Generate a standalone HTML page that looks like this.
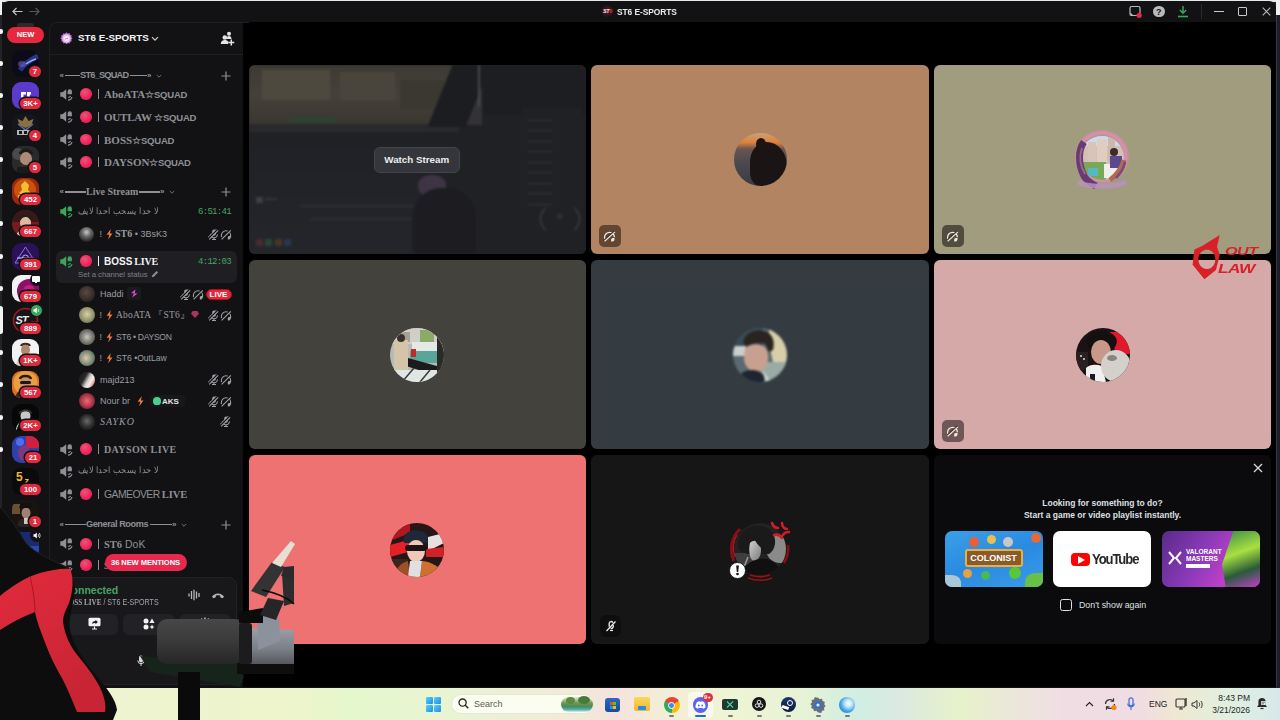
<!DOCTYPE html>
<html><head><meta charset="utf-8">
<style>
*{margin:0;padding:0;box-sizing:border-box}
html,body{width:1280px;height:720px;overflow:hidden;background:#242426;font-family:"Liberation Sans",sans-serif}
.abs{position:absolute;white-space:nowrap}
#topline{left:0;top:0;width:1280px;height:2px;background:#e8e8e8}
#win{left:2px;top:1px;width:1274px;height:687px;background:#121214;border-radius:7px 7px 0 0;overflow:hidden}
#taskbar{left:0;top:688px;width:1280px;height:32px;background:linear-gradient(90deg,#edf4d2 0%,#eef5cc 23%,#e4f7cc 28%,#e8f5d2 34%,#f2ead8 45%,#f4e2de 48%,#f3ecd8 51%,#eff5d4 57%,#e6f2d6 63%,#cfeee2 67%,#dae9e2 70%,#e6f2ca 75%,#ebe8da 79%,#f0dde3 83%,#f0dce3 89%,#efe8d2 92%,#e0f0e0 96%,#d8e8ea 100%)}
#main{left:243px;top:22px;width:1033px;height:665px;background:#000}
.tile{position:absolute;border-radius:6px;overflow:hidden}
.av{position:absolute;border-radius:50%;overflow:hidden}
.cat{font-family:"Liberation Serif",serif;font-size:9.6px;color:#8b8e93;font-weight:bold;letter-spacing:-0.2px}
.cn{font-family:"Liberation Serif",serif;font-size:10.5px;font-weight:bold;color:#8b8e93}
.ar{font-size:10px;color:#8b8e93}
.tm{font-family:"Liberation Mono",monospace;font-size:9px;letter-spacing:-0.7px;color:#46a466;line-height:12px}
.un{font-size:9px;color:#9a9da3;line-height:12px}
.sf{font-family:"Liberation Serif",serif}
.badge{height:11px;border-radius:6px;background:#e02a3e;color:#fff;font-size:7.8px;font-weight:bold;text-align:center;line-height:11px;box-shadow:0 0 0 1.5px #121214}

</style></head><body>
<div id="topline" class="abs"></div>
<div id="win" class="abs"></div>
<div id="main" class="abs"></div>
<div class="abs" style="left:601px;top:5px;width:12px;height:12px;border-radius:50%;background:radial-gradient(circle at 50% 50%,#5a1a22 0,#2a1418 60%,#1a1012 100%)"></div>
<div class="abs" style="left:603px;top:8px;font-size:5.5px;font-weight:bold;font-style:italic;color:#e8e8ec;letter-spacing:-0.4px;line-height:6px">ST<span style="color:#e02030">6</span></div>
<div class="abs" style="left:617px;top:5.5px;font-size:9.8px;font-weight:bold;color:#e8e9ec;line-height:11px;letter-spacing:-0.1px;transform:scaleX(.86);transform-origin:0 50%">ST6 E-SPORTS</div>
<svg class="abs" style="left:1129px;top:5px" width="13" height="13" viewBox="0 0 13 13"><rect x="1" y="1.5" width="10" height="9" rx="1.5" fill="none" stroke="#b8b9bd" stroke-width="1.2"/><path d="M1.5 7.5l3 3h-3z" fill="#b8b9bd"/><circle cx="10.2" cy="10.3" r="2.6" fill="#e8264a"/></svg>
<div class="abs" style="left:1153px;top:5.5px;width:11.5px;height:11.5px;border-radius:50%;background:#b8b9bd;color:#121214;font-size:9px;font-weight:bold;text-align:center;line-height:12px">?</div>
<svg class="abs" style="left:1177px;top:5px" width="12" height="13" viewBox="0 0 12 13"><path d="M6 1v7M2.8 5l3.2 3.2L9.2 5" stroke="#3ba55c" stroke-width="1.5" fill="none"/><path d="M1 11.5h10" stroke="#3ba55c" stroke-width="1.6"/></svg>
<div class="abs" style="left:1201px;top:4px;width:1px;height:15px;background:#2a2a2e"></div>
<div class="abs" style="left:1214px;top:11px;width:10px;height:1.2px;background:#c8c9cc"></div>
<div class="abs" style="left:1237.5px;top:6.5px;width:9px;height:9px;border:1.2px solid #c8c9cc;border-radius:1px"></div>
<svg class="abs" style="left:1261.5px;top:7px" width="9" height="9" viewBox="0 0 9 9"><path d="M.7 .7l7.6 7.6M8.3 .7L.7 8.3" stroke="#b8b9bc" stroke-width="1.1"/></svg>
<div class="abs" style="left:1276px;top:0;width:4px;height:15px;background:#f0f0f0"></div><div class="abs" style="left:1276px;top:15px;width:4px;height:672px;background:#1e1e2a"></div><div class="abs" style="left:1276px;top:15px;width:1px;height:672px;background:#3a3a42"></div><div class="abs" style="left:0;top:0;width:2px;height:15px;background:#f0f0f0"></div>

<div class="abs" style="left:17px;top:23px;width:17px;height:5px;border-radius:3px;background:#2a2a30"></div>
<div class="abs" style="left:7px;top:27px;width:37px;height:16px;border-radius:8px;background:#e5273f;color:#fff;font-size:7.5px;font-weight:bold;text-align:center;line-height:16px">NEW</div>
<svg class="abs" style="left:12px;top:49.5px" width="27" height="27" viewBox="0 0 27 27"><defs><clipPath id="gc63"><rect width="27" height="27" rx="9"/></clipPath></defs><g clip-path="url(#gc63)"><rect width="27" height="27" fill="#0b0c18"/><path d="M8 20c4-6 10-10 18-14" stroke="#3a48b8" stroke-width="5" opacity=".7"/><path d="M14 14c3-2 6-4 10-5" stroke="#90b0ff" stroke-width="1.5"/><ellipse cx="10" cy="14" rx="4" ry="3" fill="#6a60c0" opacity=".6"/></g></svg>
<div class="abs badge" style="left:29px;top:65.5px;width:12px">7</div>
<svg class="abs" style="left:12px;top:81.5px" width="27" height="27" viewBox="0 0 27 27"><defs><clipPath id="gc95"><rect width="27" height="27" rx="9"/></clipPath></defs><g clip-path="url(#gc95)"><rect width="27" height="27" fill="#5c3acb"/><path d="M9 10h5v2.5h-2.5v3H9z M15 10h4v2.5h-1.2V16H15z" fill="#fff"/></g></svg>
<div class="abs badge" style="left:20px;top:97.5px;width:21px">3K+</div>
<svg class="abs" style="left:12px;top:113.5px" width="27" height="27" viewBox="0 0 27 27"><defs><clipPath id="gc127"><rect width="27" height="27" rx="9"/></clipPath></defs><g clip-path="url(#gc127)"><rect width="27" height="27" fill="#15161c"/><path d="M13.5 2l3 5 5-2-2 6-6 3-6-3-2-6 5 2z" fill="#8a7040"/><path d="M6 10l7.5 6 7.5-6" stroke="#5a70a0" stroke-width="1.5" fill="none"/><rect x="5" y="16" width="16" height="5" fill="#d0d0d0" opacity=".85"/><rect x="7" y="17" width="3" height="3" fill="#15161c"/><rect x="12" y="17" width="3" height="3" fill="#15161c"/></g></svg>
<div class="abs badge" style="left:29px;top:129.5px;width:12px">4</div>
<svg class="abs" style="left:12px;top:145.5px" width="27" height="27" viewBox="0 0 27 27"><defs><clipPath id="gc159"><rect width="27" height="27" rx="9"/></clipPath></defs><g clip-path="url(#gc159)"><rect width="27" height="27" fill="#2a2a2c"/><circle cx="6" cy="8" r="6" fill="#4a4a4a"/><ellipse cx="14" cy="13" rx="6" ry="7" fill="#b08a78"/><path d="M8 8c2-5 10-5 12 0" stroke="#1e1a18" stroke-width="3" fill="none"/><path d="M9 16c2 4 8 4 10 0v4H9z" fill="#3a2e28"/><rect x="5" y="21" width="18" height="6" fill="#1a1a1a"/></g></svg>
<div class="abs badge" style="left:29px;top:161.5px;width:12px">5</div>
<svg class="abs" style="left:12px;top:177.5px" width="27" height="27" viewBox="0 0 27 27"><defs><clipPath id="gc191"><rect width="27" height="27" rx="9"/></clipPath></defs><g clip-path="url(#gc191)"><rect width="27" height="27" fill="#9a2a0a"/><circle cx="13" cy="12" r="11" fill="#d85a14" opacity=".8"/><path d="M9 7l4-4 4 4-1 5 3 3-6 4-6-4 3-3z" fill="#f0c030"/><rect x="6" y="17" width="14" height="3" fill="#f0b020"/></g></svg>
<div class="abs badge" style="left:20px;top:193.5px;width:21px">452</div>
<svg class="abs" style="left:12px;top:209.5px" width="27" height="27" viewBox="0 0 27 27"><defs><clipPath id="gc223"><rect width="27" height="27" rx="13.5"/></clipPath></defs><g clip-path="url(#gc223)"><rect width="27" height="27" fill="#7a1a1e"/><rect x="0" y="0" width="27" height="12" fill="#3a1818"/><ellipse cx="13.5" cy="13" rx="5.5" ry="6.5" fill="#e0b8a0"/><path d="M8 9c1-4 10-5 11 0" stroke="#2a1c18" stroke-width="3" fill="none"/><path d="M4 27c1-6 5-8 9.5-8s8.5 2 9.5 8z" fill="#e8e0d8"/></g></svg>
<div class="abs badge" style="left:20px;top:225.5px;width:21px">667</div>
<svg class="abs" style="left:12px;top:242.5px" width="27" height="27" viewBox="0 0 27 27"><defs><clipPath id="gc256"><rect width="27" height="27" rx="9"/></clipPath></defs><g clip-path="url(#gc256)"><rect width="27" height="27" fill="#2a1258"/><path d="M13.5 4L24 20H3z" fill="none" stroke="#9a70d8" stroke-width="1"/><path d="M5 15h17" stroke="#b890e8" stroke-width="1.5"/><circle cx="13.5" cy="15" r="3" fill="none" stroke="#c8a8f0" stroke-width="1"/></g></svg>
<div class="abs badge" style="left:20px;top:258.5px;width:21px">391</div>
<svg class="abs" style="left:12px;top:274.5px" width="27" height="27" viewBox="0 0 27 27"><defs><clipPath id="gc288"><rect width="27" height="27" rx="9"/></clipPath></defs><g clip-path="url(#gc288)"><rect width="27" height="27" fill="#f4f0f4"/><circle cx="17" cy="16" r="12" fill="#8a1068"/><circle cx="17" cy="16" r="6" fill="#c02080"/><circle cx="17" cy="16" r="2" fill="#300820"/><path d="M19 24l8-3v6h-8z" fill="#c01020"/></g></svg>
<div class="abs badge" style="left:20px;top:290.5px;width:21px">679</div>
<svg class="abs" style="left:12px;top:306.5px" width="27" height="27" viewBox="0 0 27 27"><defs><clipPath id="gc320"><rect width="27" height="27" rx="13.5"/></clipPath></defs><g clip-path="url(#gc320)"><rect width="27" height="27" fill="#161618"/><circle cx="13.5" cy="13.5" r="12" fill="none" stroke="#a01820" stroke-width="1.6"/><text x="3.5" y="17" font-family="Liberation Sans" font-weight="bold" font-style="italic" font-size="11" fill="#e8e8ee" letter-spacing="-1">ST</text><text x="19" y="18" font-family="Liberation Sans" font-weight="bold" font-size="5" fill="#e02030">PS</text></g></svg>
<div class="abs badge" style="left:20px;top:322.5px;width:21px">889</div>
<svg class="abs" style="left:12px;top:338.5px" width="27" height="27" viewBox="0 0 27 27"><defs><clipPath id="gc352"><rect width="27" height="27" rx="9"/></clipPath></defs><g clip-path="url(#gc352)"><rect width="27" height="27" fill="#f2f2f2"/><ellipse cx="13.5" cy="11" rx="4.5" ry="5.5" fill="#b08a70"/><path d="M9 7c1-3 8-3 9 0" stroke="#3a2a20" stroke-width="2.2" fill="none"/><path d="M4 27c0-6 4-10 9.5-10S23 21 23 27z" fill="#d8d0c0"/></g></svg>
<div class="abs badge" style="left:20px;top:354.5px;width:21px">1K+</div>
<svg class="abs" style="left:12px;top:370.5px" width="27" height="27" viewBox="0 0 27 27"><defs><clipPath id="gc384"><rect width="27" height="27" rx="9"/></clipPath></defs><g clip-path="url(#gc384)"><rect width="27" height="27" fill="#e07020"/><circle cx="13.5" cy="12" r="12" fill="#f0b050" opacity=".7"/><ellipse cx="13.5" cy="13" rx="5.5" ry="6.5" fill="#c89070"/><rect x="8" y="10" width="11" height="3" rx="1.5" fill="#1a1a1a"/><path d="M8 8c1-4 10-4 11 0" stroke="#2a1a14" stroke-width="2.5" fill="none"/><path d="M3 27c1-6 5-8 10.5-8s9.5 2 10.5 8z" fill="#3a2a24"/></g></svg>
<div class="abs badge" style="left:20px;top:386.5px;width:21px">567</div>
<svg class="abs" style="left:12px;top:403.5px" width="27" height="27" viewBox="0 0 27 27"><defs><clipPath id="gc417"><rect width="27" height="27" rx="9"/></clipPath></defs><g clip-path="url(#gc417)"><rect width="27" height="27" fill="#070707"/><ellipse cx="13.5" cy="12" rx="5" ry="6" fill="#c8c8c8"/><path d="M7 10c0-6 13-6 13 0l-2-1c-2-2-7-2-9 0z" fill="#3a3a3a"/><path d="M4 27c1-7 5-10 9.5-10s8.5 3 9.5 10" stroke="#d0d0d0" stroke-width="1.2" fill="none"/></g></svg>
<div class="abs badge" style="left:20px;top:419.5px;width:21px">2K+</div>
<svg class="abs" style="left:12px;top:435.5px" width="27" height="27" viewBox="0 0 27 27"><defs><clipPath id="gc449"><rect width="27" height="27" rx="9"/></clipPath></defs><g clip-path="url(#gc449)"><rect width="27" height="27" fill="#3040a8"/><rect x="14" y="0" width="13" height="12" fill="#d02040"/><circle cx="8" cy="6" r="4" fill="#4a70f0"/><ellipse cx="12" cy="17" rx="6" ry="8" fill="#7a3a80"/><circle cx="20" cy="20" r="5" fill="#c0c0e0" opacity=".6"/></g></svg>
<div class="abs badge" style="left:25px;top:451.5px;width:16px">21</div>
<svg class="abs" style="left:12px;top:467.5px" width="27" height="27" viewBox="0 0 27 27"><defs><clipPath id="gc481"><rect width="27" height="27" rx="9"/></clipPath></defs><g clip-path="url(#gc481)"><rect width="27" height="27" fill="#0a0a0a"/><text x="4" y="13" font-family="Liberation Sans" font-weight="bold" font-size="12" fill="#f0b830">5</text><text x="12.5" y="15.5" font-family="Liberation Sans" font-weight="bold" font-size="9" fill="#f0c040">z</text></g></svg>
<div class="abs badge" style="left:20px;top:483.5px;width:21px">100</div>
<svg class="abs" style="left:12px;top:499.5px" width="27" height="27" viewBox="0 0 27 27"><defs><clipPath id="gc513"><rect width="27" height="27" rx="9"/></clipPath></defs><g clip-path="url(#gc513)"><rect width="27" height="27" fill="#1a1410"/><rect x="0" y="4" width="8" height="10" fill="#6a5030"/><ellipse cx="14" cy="13" rx="4.5" ry="5.5" fill="#a08070"/><path d="M7 8h14l-2-5h-10z" fill="#141010"/><path d="M5 27c1-6 4-9 9-9s8 3 9 9z" fill="#2a2220"/><rect x="12" y="18" width="4" height="6" fill="#d0c8c0"/></g></svg>
<div class="abs badge" style="left:29px;top:515.5px;width:12px">1</div>
<svg class="abs" style="left:12px;top:531.5px" width="27" height="27" viewBox="0 0 27 27"><defs><clipPath id="gc545"><rect width="27" height="27" rx="9"/></clipPath></defs><g clip-path="url(#gc545)"><rect width="27" height="27" fill="#1a2a70"/><rect x="0" y="14" width="27" height="13" fill="#2848b0"/><path d="M14 20l13 3v4H12z" fill="#c02030"/></g></svg>
<div class="abs" style="left:29.5px;top:273px;width:13px;height:13px;border-radius:50%;background:#121214"></div>
<div class="abs" style="left:32px;top:276px;width:8px;height:5.5px;border-radius:1px;background:#fff"></div>
<div class="abs" style="left:35.2px;top:281px;width:1.6px;height:2px;background:#fff"></div>
<div class="abs" style="left:30px;top:304px;width:13px;height:13px;border-radius:50%;background:#3ba55c;border:1.5px solid #121214"></div>
<svg class="abs" style="left:33px;top:307px" width="7" height="7" viewBox="0 0 7 7"><path d="M0.5 2.3h1.3L3.8.6v5.8L1.8 4.7H.5z" fill="#fff"/><path d="M5 2c.6.8.6 2.2 0 3" stroke="#fff" stroke-width=".8" fill="none"/></svg>
<div class="abs" style="left:30px;top:529px;width:13px;height:13px;border-radius:50%;background:#121214"></div>
<svg class="abs" style="left:33px;top:532px" width="8" height="7" viewBox="0 0 8 7"><path d="M0.5 2.3h1.3L3.8.6v5.8L1.8 4.7H.5z" fill="#fff"/><path d="M5 2c.6.8.6 2.2 0 3M6.3 1c1 1.3 1 3.7 0 5" stroke="#fff" stroke-width=".8" fill="none"/></svg>
<div class="abs" style="left:-1px;top:28.5px;width:4px;height:5px;border-radius:2px;background:#f2f3f5"></div>
<div class="abs" style="left:-1px;top:60.5px;width:4px;height:5px;border-radius:2px;background:#f2f3f5"></div>
<div class="abs" style="left:-1px;top:92.5px;width:4px;height:5px;border-radius:2px;background:#f2f3f5"></div>
<div class="abs" style="left:-1px;top:124.5px;width:4px;height:5px;border-radius:2px;background:#f2f3f5"></div>
<div class="abs" style="left:-1px;top:156.5px;width:4px;height:5px;border-radius:2px;background:#f2f3f5"></div>
<div class="abs" style="left:-1px;top:188.5px;width:4px;height:5px;border-radius:2px;background:#f2f3f5"></div>
<div class="abs" style="left:-1px;top:220.5px;width:4px;height:5px;border-radius:2px;background:#f2f3f5"></div>
<div class="abs" style="left:-1px;top:253.5px;width:4px;height:5px;border-radius:2px;background:#f2f3f5"></div>
<div class="abs" style="left:-1px;top:285.5px;width:4px;height:5px;border-radius:2px;background:#f2f3f5"></div>
<div class="abs" style="left:-1px;top:349.5px;width:4px;height:5px;border-radius:2px;background:#f2f3f5"></div>
<div class="abs" style="left:-1px;top:381.5px;width:4px;height:5px;border-radius:2px;background:#f2f3f5"></div>
<div class="abs" style="left:-1px;top:414.5px;width:4px;height:5px;border-radius:2px;background:#f2f3f5"></div>
<div class="abs" style="left:-1px;top:446.5px;width:4px;height:5px;border-radius:2px;background:#f2f3f5"></div>
<div class="abs" style="left:-1px;top:510.5px;width:4px;height:5px;border-radius:2px;background:#f2f3f5"></div>
<div class="abs" style="left:-2px;top:306px;width:5px;height:28px;border-radius:3px;background:#f2f3f5"></div>
<svg class="abs" style="left:11.5px;top:6.5px" width="11" height="9" viewBox="0 0 11 9"><path d="M10.5 4.5H1.2M4.5 1L1 4.5 4.5 8" stroke="#c4c5c8" stroke-width="1.2" fill="none"/></svg>
<svg class="abs" style="left:28.5px;top:6.5px" width="11" height="9" viewBox="0 0 11 9"><path d="M.5 4.5h9.3M6.5 1L10 4.5 6.5 8" stroke="#55565a" stroke-width="1.2" fill="none"/></svg>
<div class="abs" style="left:49px;top:22px;width:200px;height:670px;border-left:1px solid #1f1f23;border-top:1px solid #1f1f23;border-top-left-radius:8px"></div>
<div class="abs" style="left:50px;top:54px;width:193px;height:1px;background:#1f1f23"></div>
<svg class="abs" style="left:60px;top:31.5px" width="13" height="13" viewBox="0 0 13 13"><path d="M6.5 0.3l1.3 1.2 1.7-.4.6 1.6 1.6.6-.4 1.7 1.2 1.3-1.2 1.3.4 1.7-1.6.6-.6 1.6-1.7-.4-1.3 1.2-1.3-1.2-1.7.4-.6-1.6-1.6-.6.4-1.7L.3 6.5l1.2-1.3-.4-1.7 1.6-.6.6-1.6 1.7.4z" fill="#b070d8"/><circle cx="6.5" cy="6.5" r="4.2" fill="#f0c0ec"/><circle cx="6.5" cy="6.5" r="2.4" fill="#fff" opacity=".85"/><path d="M5 7.5c1-1 2-1.5 3-1" stroke="#9a50c0" stroke-width=".8" fill="none"/></svg>
<div class="abs" style="left:78px;top:32px;font-size:9.8px;font-weight:bold;color:#f2f3f5;line-height:12px">ST6 E-SPORTS</div>
<svg class="abs" style="left:151px;top:35.5px" width="8" height="6" viewBox="0 0 8 6"><path d="M1 1.2l3 3 3-3" stroke="#d0d1d4" stroke-width="1.2" fill="none"/></svg>
<svg class="abs" style="left:220px;top:31px" width="15" height="15" viewBox="0 0 15 15"><circle cx="9" cy="2.8" r="2" fill="#e3e4e7"/><path d="M6.5 8c0-2 1-3 2.5-3s2.5 1 2.5 3z" fill="#e3e4e7"/><circle cx="4.8" cy="6.5" r="2.3" fill="#e3e4e7"/><path d="M0.8 13c0-2.6 1.6-4 4-4 1.6 0 2.8.6 3.4 1.6V13z" fill="#e3e4e7"/><path d="M11.3 8.5v6M8.3 11.5h6" stroke="#e3e4e7" stroke-width="1.5"/></svg>
<div class="abs" style="left:59.5px;top:69.5px;font-size:8px;color:#8e9095;line-height:12px;font-weight:bold">«</div>
<div class="abs" style="left:65px;top:74.8px;width:15px;height:1.4px;background:#8e9095"></div>
<div class="abs" style="left:80px;top:69.0px;line-height:12px;color:#8e9095;font-family:'Liberation Sans',sans-serif;font-weight:bold;font-size:9.2px;letter-spacing:-0.75px">ST6_SQUAD</div>
<div class="abs" style="left:130px;top:74.8px;width:17px;height:1.4px;background:#8e9095"></div>
<div class="abs" style="left:147px;top:69.5px;font-size:8px;color:#8e9095;line-height:12px;font-weight:bold">»</div>
<svg class="abs" style="left:156px;top:73.5px" width="6" height="5" viewBox="0 0 6 5"><path d="M.8 1l2.2 2.2L5.2 1" stroke="#6f7278" stroke-width="1" fill="none"/></svg>
<svg class="abs" style="left:221px;top:70.5px" width="10" height="10" viewBox="0 0 10 10"><path d="M5 .5v9M.5 5h9" stroke="#8e9095" stroke-width="1.2"/></svg>
<div class="abs" style="left:59.5px;top:186px;font-size:8px;color:#8e9095;line-height:12px;font-weight:bold">«</div>
<div class="abs" style="left:65px;top:191.3px;width:21px;height:1.4px;background:#8e9095"></div>
<div class="abs" style="left:86px;top:185.5px;line-height:12px;color:#8e9095;font-family:'Liberation Serif',serif;font-weight:bold;font-size:10px">Live Stream</div>
<div class="abs" style="left:138.5px;top:191.3px;width:21.5px;height:1.4px;background:#8e9095"></div>
<div class="abs" style="left:160px;top:186px;font-size:8px;color:#8e9095;line-height:12px;font-weight:bold">»</div>
<svg class="abs" style="left:169px;top:190px" width="6" height="5" viewBox="0 0 6 5"><path d="M.8 1l2.2 2.2L5.2 1" stroke="#6f7278" stroke-width="1" fill="none"/></svg>
<svg class="abs" style="left:221px;top:187px" width="10" height="10" viewBox="0 0 10 10"><path d="M5 .5v9M.5 5h9" stroke="#8e9095" stroke-width="1.2"/></svg>
<div class="abs" style="left:59.5px;top:518.5px;font-size:8px;color:#8e9095;line-height:12px;font-weight:bold">«</div>
<div class="abs" style="left:65px;top:523.8px;width:21px;height:1.4px;background:#8e9095"></div>
<div class="abs" style="left:86px;top:518.0px;line-height:12px;color:#8e9095;font-family:'Liberation Sans',sans-serif;font-weight:bold;font-size:9.2px;letter-spacing:-0.45px">General Rooms</div>
<div class="abs" style="left:150px;top:523.8px;width:22px;height:1.4px;background:#8e9095"></div>
<div class="abs" style="left:172px;top:518.5px;font-size:8px;color:#8e9095;line-height:12px;font-weight:bold">»</div>
<svg class="abs" style="left:181px;top:522.5px" width="6" height="5" viewBox="0 0 6 5"><path d="M.8 1l2.2 2.2L5.2 1" stroke="#6f7278" stroke-width="1" fill="none"/></svg>
<svg class="abs" style="left:221px;top:519.5px" width="10" height="10" viewBox="0 0 10 10"><path d="M5 .5v9M.5 5h9" stroke="#8e9095" stroke-width="1.2"/></svg>
<svg class="abs" style="left:60px;top:87.5px" width="13" height="13" viewBox="0 0 13 13"><path d="M0.3 4.3h2.2L6.2 1.2v10.6L2.5 8.7H0.3z" fill="#8e9095"/><path d="M7.6 6.2V3.4a2.15 2.15 0 0 1 4.3 0v2.8z" fill="#8e9095"/><path d="M8.2 9.3c1 .1 1.8-.4 2.4-1.2M8 12.2c2 0 3.5-1.2 4-3" stroke="#8e9095" stroke-width="1.2" fill="none"/></svg>
<div class="abs" style="left:80px;top:88.25px;width:11.5px;height:11.5px;border-radius:50%;background:radial-gradient(circle at 40% 35%,#f5507a 0,#e9245a 60%,#d81c4c 100%)"></div>
<div class="abs" style="left:98px;top:89.2px;width:1.4px;height:9.5px;background:#8e9095"></div>
<div class="abs" style="left:104px;top:87.3px;line-height:12px;color:#8e9095"><span style="font-family:'Liberation Serif',serif;font-weight:bold;font-size:11px;letter-spacing:0px;display:inline-block;transform:scaleX(1.0);transform-origin:0 50%">AboATA</span><span style="font-family:'Liberation Sans',sans-serif;font-size:9.5px;letter-spacing:-0.2px;font-weight:bold">☆SQUAD</span></div>
<svg class="abs" style="left:60px;top:110.3px" width="13" height="13" viewBox="0 0 13 13"><path d="M0.3 4.3h2.2L6.2 1.2v10.6L2.5 8.7H0.3z" fill="#8e9095"/><path d="M7.6 6.2V3.4a2.15 2.15 0 0 1 4.3 0v2.8z" fill="#8e9095"/><path d="M8.2 9.3c1 .1 1.8-.4 2.4-1.2M8 12.2c2 0 3.5-1.2 4-3" stroke="#8e9095" stroke-width="1.2" fill="none"/></svg>
<div class="abs" style="left:80px;top:111.05px;width:11.5px;height:11.5px;border-radius:50%;background:radial-gradient(circle at 40% 35%,#f5507a 0,#e9245a 60%,#d81c4c 100%)"></div>
<div class="abs" style="left:98px;top:112.0px;width:1.4px;height:9.5px;background:#8e9095"></div>
<div class="abs" style="left:104px;top:110.1px;line-height:12px;color:#8e9095"><span style="font-family:'Liberation Serif',serif;font-weight:bold;font-size:11px;letter-spacing:-0.2px;display:inline-block;transform:scaleX(1.0);transform-origin:0 50%">OUTLAW</span><span style="font-family:'Liberation Sans',sans-serif;font-size:9.5px;letter-spacing:-0.2px;font-weight:bold"> ☆SQUAD</span></div>
<svg class="abs" style="left:60px;top:132.8px" width="13" height="13" viewBox="0 0 13 13"><path d="M0.3 4.3h2.2L6.2 1.2v10.6L2.5 8.7H0.3z" fill="#8e9095"/><path d="M7.6 6.2V3.4a2.15 2.15 0 0 1 4.3 0v2.8z" fill="#8e9095"/><path d="M8.2 9.3c1 .1 1.8-.4 2.4-1.2M8 12.2c2 0 3.5-1.2 4-3" stroke="#8e9095" stroke-width="1.2" fill="none"/></svg>
<div class="abs" style="left:80px;top:133.55px;width:11.5px;height:11.5px;border-radius:50%;background:radial-gradient(circle at 40% 35%,#f5507a 0,#e9245a 60%,#d81c4c 100%)"></div>
<div class="abs" style="left:98px;top:134.5px;width:1.4px;height:9.5px;background:#8e9095"></div>
<div class="abs" style="left:104px;top:132.60000000000002px;line-height:12px;color:#8e9095"><span style="font-family:'Liberation Serif',serif;font-weight:bold;font-size:11px;letter-spacing:0px;display:inline-block;transform:scaleX(1.0);transform-origin:0 50%">BOSS</span><span style="font-family:'Liberation Sans',sans-serif;font-size:9.5px;letter-spacing:-0.2px;font-weight:bold">☆SQUAD</span></div>
<svg class="abs" style="left:60px;top:155.5px" width="13" height="13" viewBox="0 0 13 13"><path d="M0.3 4.3h2.2L6.2 1.2v10.6L2.5 8.7H0.3z" fill="#8e9095"/><path d="M7.6 6.2V3.4a2.15 2.15 0 0 1 4.3 0v2.8z" fill="#8e9095"/><path d="M8.2 9.3c1 .1 1.8-.4 2.4-1.2M8 12.2c2 0 3.5-1.2 4-3" stroke="#8e9095" stroke-width="1.2" fill="none"/></svg>
<div class="abs" style="left:80px;top:156.25px;width:11.5px;height:11.5px;border-radius:50%;background:radial-gradient(circle at 40% 35%,#f5507a 0,#e9245a 60%,#d81c4c 100%)"></div>
<div class="abs" style="left:98px;top:157.2px;width:1.4px;height:9.5px;background:#8e9095"></div>
<div class="abs" style="left:104px;top:155.3px;line-height:12px;color:#8e9095"><span style="font-family:'Liberation Serif',serif;font-weight:bold;font-size:11px;letter-spacing:0px;display:inline-block;transform:scaleX(1.0);transform-origin:0 50%">DAYSON</span><span style="font-family:'Liberation Sans',sans-serif;font-size:9.5px;letter-spacing:-0.4px;font-weight:bold">☆SQUAD</span></div>
<svg class="abs" style="left:60px;top:205.0px" width="13" height="13" viewBox="0 0 13 13"><path d="M0.3 4.3h2.2L6.2 1.2v10.6L2.5 8.7H0.3z" fill="#3ba55c"/><path d="M7.6 6.2V3.4a2.15 2.15 0 0 1 4.3 0v2.8z" fill="#3ba55c"/><path d="M8.2 9.3c1 .1 1.8-.4 2.4-1.2M8 12.2c2 0 3.5-1.2 4-3" stroke="#3ba55c" stroke-width="1.2" fill="none"/></svg>
<div class="abs" style="left:78px;top:204.5px;font-size:8.8px;line-height:12px;color:#8e9095;transform:scaleX(.905);transform-origin:0 50%">لا حدا يسحب احدا لايف</div>
<div class="abs tm" style="left:198px;top:206px">6:51:41</div>
<div class="abs" style="left:79px;top:226.5px;width:15px;height:15px;border-radius:50%;background:radial-gradient(circle at 50% 35%,#c8c8c8 0,#6a6a6a 35%,#262626 75%,#111 100%)"></div>
<div class="abs un" style="left:99.5px;top:228px">!</div>
<svg class="abs" style="left:105.8px;top:229.3px" width="7" height="10.5" viewBox="0 0 8 12"><path d="M5.4 0L0.8 6.6h3L2.4 12l5-7H4.5z" fill="#f27a3c"/></svg>
<div class="abs un" style="left:115px;top:228px"><span style="font-family:'Liberation Serif',serif;font-weight:bold;font-size:10px">ST6</span> • 3BsK3</div>
<svg class="abs" style="left:208px;top:228.5px" width="11" height="11" viewBox="0 0 11 11"><rect x="4.2" y="0.6" width="3.6" height="6.2" rx="1.8" fill="#a0a3a8"/><path d="M2.5 5.4a3.5 3.5 0 0 0 7 0M6 8.9v1.6M4 10.5h4" stroke="#a0a3a8" stroke-width="1" fill="none"/><path d="M0.4 9.6L9.4 .6" stroke="#121214" stroke-width="1.6"/><path d="M1.2 10.4L10.2 1.4" stroke="#a0a3a8" stroke-width="1.05"/><path d="M-.4 8.8L8.6 -.2" stroke="#a0a3a8" stroke-width=".9"/></svg>
<svg class="abs" style="left:220px;top:228.5px" width="12" height="11" viewBox="0 0 12 11"><path d="M1.4 8.2V6.3A4.6 4.6 0 0 1 10.6 6.3V8.2" stroke="#a0a3a8" stroke-width="1.05" fill="none"/><path d="M7.8 10.5c1.9 0 2.9-.6 2.9-2.3V7H9.3c-1 0-1.5.6-1.5 1.5z" fill="#a0a3a8"/><path d="M1.3 9.8L10.5 .8" stroke="#121214" stroke-width="1.8"/><path d="M1.6 10.4L10.8 1.4" stroke="#a0a3a8" stroke-width="1.05"/></svg>
<div class="abs" style="left:55.5px;top:250.5px;width:181px;height:32px;border-radius:6px;background:#1f1f23"></div>
<svg class="abs" style="left:60px;top:254.5px" width="13" height="13" viewBox="0 0 13 13"><path d="M0.3 4.3h2.2L6.2 1.2v10.6L2.5 8.7H0.3z" fill="#3ba55c"/><path d="M7.6 6.2V3.4a2.15 2.15 0 0 1 4.3 0v2.8z" fill="#3ba55c"/><path d="M8.2 9.3c1 .1 1.8-.4 2.4-1.2M8 12.2c2 0 3.5-1.2 4-3" stroke="#3ba55c" stroke-width="1.2" fill="none"/></svg>
<div class="abs" style="left:80px;top:255.25px;width:11.5px;height:11.5px;border-radius:50%;background:radial-gradient(circle at 40% 35%,#f5507a 0,#e9245a 60%,#d81c4c 100%)"></div>
<div class="abs" style="left:98px;top:256.2px;width:1.4px;height:9.5px;background:#f2f3f5"></div>
<div class="abs" style="left:104px;top:254.3px;line-height:12px;color:#f2f3f5"><span style="font-family:'Liberation Sans',sans-serif;font-size:10px;letter-spacing:0px;font-weight:bold">BOSS</span><span style="margin-left:2px"></span><span style="font-family:'Liberation Serif',serif;font-weight:bold;font-size:10px;letter-spacing:-0.2px;display:inline-block;transform:scaleX(1.0);transform-origin:0 50%">LIVE</span></div>
<div class="abs tm" style="left:198px;top:255.5px">4:12:03</div>
<div class="abs" style="left:78px;top:269px;font-size:7.7px;color:#7d8087;line-height:11px">Set a channel status</div>
<svg class="abs" style="left:151px;top:270px" width="8" height="8" viewBox="0 0 8 8"><path d="M.8 7.2l.5-2L5.6.9 7.1 2.4 2.8 6.7z" fill="#8b8e93"/></svg>
<div class="abs" style="left:79px;top:286px;width:16px;height:16px;border-radius:50%;background:radial-gradient(circle at 45% 40%,#5a4a42 0,#3a302c 50%,#1a1614 100%)"></div>
<div class="abs un" style="left:100px;top:288px">Haddi</div>
<div class="abs" style="left:79px;top:307px;width:16px;height:16px;border-radius:50%;background:radial-gradient(circle at 50% 45%,#d8d0a8 0,#9a9870 50%,#50604a 100%)"></div>
<div class="abs un" style="left:116px;top:309px"><span style="font-family:'Liberation Serif',serif;font-size:9.5px;letter-spacing:.2px">AboATA 『ST6』</span></div>
<div class="abs" style="left:79px;top:328.7px;width:16px;height:16px;border-radius:50%;background:radial-gradient(circle at 50% 50%,#c8c8c0 0,#7a7a72 50%,#3a3a36 100%)"></div>
<div class="abs un" style="left:116px;top:330.7px"><span style="font-size:8.6px;letter-spacing:-0.3px">ST6 • DAYSON</span></div>
<div class="abs" style="left:79px;top:349.8px;width:16px;height:16px;border-radius:50%;background:radial-gradient(circle at 45% 50%,#e0c8a8 0,#7a8a78 55%,#3a4a48 100%)"></div>
<div class="abs un" style="left:116px;top:351.8px"><span style="font-size:8.6px">ST6 •OutLaw</span></div>
<div class="abs" style="left:79px;top:371.6px;width:16px;height:16px;border-radius:50%;background:linear-gradient(120deg,#161616 0,#2a2a2a 35%,#d8d0c8 55%,#f0f0f0 70%,#e02020 100%)"></div>
<div class="abs un" style="left:100px;top:373.6px">majd213</div>
<div class="abs" style="left:79px;top:393px;width:16px;height:16px;border-radius:50%;background:radial-gradient(circle at 50% 50%,#f06878 0,#b03848 50%,#3a1a1c 100%)"></div>
<div class="abs un" style="left:100px;top:395px">Nour br</div>
<div class="abs" style="left:79px;top:413.8px;width:16px;height:16px;border-radius:50%;background:radial-gradient(circle at 50% 45%,#6a6a6a 0,#2e2e2e 50%,#0e0e0e 100%)"></div>
<div class="abs un" style="left:100px;top:415.8px"><span style="font-family:'Liberation Serif',serif;font-style:italic;font-size:10px;letter-spacing:1px">SAYKO</span></div>
<div class="abs un" style="left:99.5px;top:309px">!</div>
<svg class="abs" style="left:106.3px;top:309.8px" width="7" height="10.5" viewBox="0 0 8 12"><path d="M5.4 0L0.8 6.6h3L2.4 12l5-7H4.5z" fill="#f27a3c"/></svg>
<div class="abs un" style="left:99.5px;top:330.7px">!</div>
<svg class="abs" style="left:106.3px;top:331.5px" width="7" height="10.5" viewBox="0 0 8 12"><path d="M5.4 0L0.8 6.6h3L2.4 12l5-7H4.5z" fill="#f27a3c"/></svg>
<div class="abs un" style="left:99.5px;top:351.8px">!</div>
<svg class="abs" style="left:106.3px;top:352.6px" width="7" height="10.5" viewBox="0 0 8 12"><path d="M5.4 0L0.8 6.6h3L2.4 12l5-7H4.5z" fill="#f27a3c"/></svg>
<svg class="abs" style="left:136.8px;top:395.8px" width="7" height="10.5" viewBox="0 0 8 12"><path d="M5.4 0L0.8 6.6h3L2.4 12l5-7H4.5z" fill="#f27a3c"/></svg>
<div class="abs" style="left:127px;top:287px;width:14px;height:13px;border-radius:3px;background:#1b1b1f"></div>
<svg class="abs" style="left:129px;top:289px" width="10" height="9" viewBox="0 0 10 9"><path d="M6.5 0.5L2 4.2h3L3.2 8.5 8.5 4.4H5.6z" fill="#e04fd8"/></svg>
<svg class="abs" style="left:180px;top:288.5px" width="11" height="11" viewBox="0 0 11 11"><rect x="4.2" y="0.6" width="3.6" height="6.2" rx="1.8" fill="#a0a3a8"/><path d="M2.5 5.4a3.5 3.5 0 0 0 7 0M6 8.9v1.6M4 10.5h4" stroke="#a0a3a8" stroke-width="1" fill="none"/><path d="M0.4 9.6L9.4 .6" stroke="#121214" stroke-width="1.6"/><path d="M1.2 10.4L10.2 1.4" stroke="#a0a3a8" stroke-width="1.05"/><path d="M-.4 8.8L8.6 -.2" stroke="#a0a3a8" stroke-width=".9"/></svg>
<svg class="abs" style="left:192px;top:288.5px" width="12" height="11" viewBox="0 0 12 11"><path d="M1.4 8.2V6.3A4.6 4.6 0 0 1 10.6 6.3V8.2" stroke="#a0a3a8" stroke-width="1.05" fill="none"/><path d="M7.8 10.5c1.9 0 2.9-.6 2.9-2.3V7H9.3c-1 0-1.5.6-1.5 1.5z" fill="#a0a3a8"/><path d="M1.3 9.8L10.5 .8" stroke="#121214" stroke-width="1.8"/><path d="M1.6 10.4L10.8 1.4" stroke="#a0a3a8" stroke-width="1.05"/></svg>
<div class="abs" style="left:205.5px;top:288.5px;width:26px;height:11.5px;border-radius:6px;background:#e2283c;border:1px solid #a8101e;color:#fff;font-size:8px;font-weight:bold;text-align:center;line-height:9.5px">LIVE</div>
<div class="abs" style="left:191px;top:311px;width:8px;height:7px;background:#a8385a;clip-path:polygon(20% 0,80% 0,100% 40%,50% 100%,0 40%)"></div>
<svg class="abs" style="left:208px;top:309.5px" width="11" height="11" viewBox="0 0 11 11"><rect x="4.2" y="0.6" width="3.6" height="6.2" rx="1.8" fill="#a0a3a8"/><path d="M2.5 5.4a3.5 3.5 0 0 0 7 0M6 8.9v1.6M4 10.5h4" stroke="#a0a3a8" stroke-width="1" fill="none"/><path d="M0.4 9.6L9.4 .6" stroke="#121214" stroke-width="1.6"/><path d="M1.2 10.4L10.2 1.4" stroke="#a0a3a8" stroke-width="1.05"/><path d="M-.4 8.8L8.6 -.2" stroke="#a0a3a8" stroke-width=".9"/></svg>
<svg class="abs" style="left:220px;top:309.5px" width="12" height="11" viewBox="0 0 12 11"><path d="M1.4 8.2V6.3A4.6 4.6 0 0 1 10.6 6.3V8.2" stroke="#a0a3a8" stroke-width="1.05" fill="none"/><path d="M7.8 10.5c1.9 0 2.9-.6 2.9-2.3V7H9.3c-1 0-1.5.6-1.5 1.5z" fill="#a0a3a8"/><path d="M1.3 9.8L10.5 .8" stroke="#121214" stroke-width="1.8"/><path d="M1.6 10.4L10.8 1.4" stroke="#a0a3a8" stroke-width="1.05"/></svg>
<svg class="abs" style="left:208px;top:374.1px" width="11" height="11" viewBox="0 0 11 11"><rect x="4.2" y="0.6" width="3.6" height="6.2" rx="1.8" fill="#a0a3a8"/><path d="M2.5 5.4a3.5 3.5 0 0 0 7 0M6 8.9v1.6M4 10.5h4" stroke="#a0a3a8" stroke-width="1" fill="none"/><path d="M0.4 9.6L9.4 .6" stroke="#121214" stroke-width="1.6"/><path d="M1.2 10.4L10.2 1.4" stroke="#a0a3a8" stroke-width="1.05"/><path d="M-.4 8.8L8.6 -.2" stroke="#a0a3a8" stroke-width=".9"/></svg>
<svg class="abs" style="left:220px;top:374.1px" width="12" height="11" viewBox="0 0 12 11"><path d="M1.4 8.2V6.3A4.6 4.6 0 0 1 10.6 6.3V8.2" stroke="#a0a3a8" stroke-width="1.05" fill="none"/><path d="M7.8 10.5c1.9 0 2.9-.6 2.9-2.3V7H9.3c-1 0-1.5.6-1.5 1.5z" fill="#a0a3a8"/><path d="M1.3 9.8L10.5 .8" stroke="#121214" stroke-width="1.8"/><path d="M1.6 10.4L10.8 1.4" stroke="#a0a3a8" stroke-width="1.05"/></svg>
<svg class="abs" style="left:208px;top:395.5px" width="11" height="11" viewBox="0 0 11 11"><rect x="4.2" y="0.6" width="3.6" height="6.2" rx="1.8" fill="#a0a3a8"/><path d="M2.5 5.4a3.5 3.5 0 0 0 7 0M6 8.9v1.6M4 10.5h4" stroke="#a0a3a8" stroke-width="1" fill="none"/><path d="M0.4 9.6L9.4 .6" stroke="#121214" stroke-width="1.6"/><path d="M1.2 10.4L10.2 1.4" stroke="#a0a3a8" stroke-width="1.05"/><path d="M-.4 8.8L8.6 -.2" stroke="#a0a3a8" stroke-width=".9"/></svg>
<svg class="abs" style="left:220px;top:395.5px" width="12" height="11" viewBox="0 0 12 11"><path d="M1.4 8.2V6.3A4.6 4.6 0 0 1 10.6 6.3V8.2" stroke="#a0a3a8" stroke-width="1.05" fill="none"/><path d="M7.8 10.5c1.9 0 2.9-.6 2.9-2.3V7H9.3c-1 0-1.5.6-1.5 1.5z" fill="#a0a3a8"/><path d="M1.3 9.8L10.5 .8" stroke="#121214" stroke-width="1.8"/><path d="M1.6 10.4L10.8 1.4" stroke="#a0a3a8" stroke-width="1.05"/></svg>
<svg class="abs" style="left:220px;top:416.3px" width="11" height="11" viewBox="0 0 11 11"><rect x="4.2" y="0.6" width="3.6" height="6.2" rx="1.8" fill="#a0a3a8"/><path d="M2.5 5.4a3.5 3.5 0 0 0 7 0M6 8.9v1.6M4 10.5h4" stroke="#a0a3a8" stroke-width="1" fill="none"/><path d="M0.4 9.6L9.4 .6" stroke="#121214" stroke-width="1.6"/><path d="M1.2 10.4L10.2 1.4" stroke="#a0a3a8" stroke-width="1.05"/><path d="M-.4 8.8L8.6 -.2" stroke="#a0a3a8" stroke-width=".9"/></svg>
<div class="abs" style="left:150px;top:395px;width:35px;height:12px;border-radius:3px;background:#18181b"></div>
<div class="abs" style="left:152.5px;top:397px;width:8px;height:8px;border-radius:50% 50% 45% 45%;background:#48d090"></div>
<div class="abs" style="left:162px;top:395.5px;font-size:8px;font-weight:bold;color:#e3e4e7;line-height:11px">AKS</div>
<svg class="abs" style="left:60px;top:442.5px" width="13" height="13" viewBox="0 0 13 13"><path d="M0.3 4.3h2.2L6.2 1.2v10.6L2.5 8.7H0.3z" fill="#8e9095"/><path d="M7.6 6.2V3.4a2.15 2.15 0 0 1 4.3 0v2.8z" fill="#8e9095"/><path d="M8.2 9.3c1 .1 1.8-.4 2.4-1.2M8 12.2c2 0 3.5-1.2 4-3" stroke="#8e9095" stroke-width="1.2" fill="none"/></svg>
<div class="abs" style="left:80px;top:443.25px;width:11.5px;height:11.5px;border-radius:50%;background:radial-gradient(circle at 40% 35%,#f5507a 0,#e9245a 60%,#d81c4c 100%)"></div>
<div class="abs" style="left:98px;top:444.2px;width:1.4px;height:9.5px;background:#8e9095"></div>
<div class="abs" style="left:104px;top:442.3px;line-height:12px;color:#8e9095"><span style="font-family:'Liberation Serif',serif;font-weight:bold;font-size:10px;letter-spacing:0.4px;display:inline-block;transform:scaleX(1.0);transform-origin:0 50%">DAYSON LIVE</span></div>
<svg class="abs" style="left:60px;top:464.5px" width="13" height="13" viewBox="0 0 13 13"><path d="M0.3 4.3h2.2L6.2 1.2v10.6L2.5 8.7H0.3z" fill="#8e9095"/><path d="M7.6 6.2V3.4a2.15 2.15 0 0 1 4.3 0v2.8z" fill="#8e9095"/><path d="M8.2 9.3c1 .1 1.8-.4 2.4-1.2M8 12.2c2 0 3.5-1.2 4-3" stroke="#8e9095" stroke-width="1.2" fill="none"/></svg>
<div class="abs" style="left:78px;top:464px;font-size:8.8px;line-height:12px;color:#8e9095;transform:scaleX(.905);transform-origin:0 50%">لا حدا يسحب احدا لايف</div>
<svg class="abs" style="left:60px;top:487.5px" width="13" height="13" viewBox="0 0 13 13"><path d="M0.3 4.3h2.2L6.2 1.2v10.6L2.5 8.7H0.3z" fill="#8e9095"/><path d="M7.6 6.2V3.4a2.15 2.15 0 0 1 4.3 0v2.8z" fill="#8e9095"/><path d="M8.2 9.3c1 .1 1.8-.4 2.4-1.2M8 12.2c2 0 3.5-1.2 4-3" stroke="#8e9095" stroke-width="1.2" fill="none"/></svg>
<div class="abs" style="left:80px;top:488.25px;width:11.5px;height:11.5px;border-radius:50%;background:radial-gradient(circle at 40% 35%,#f5507a 0,#e9245a 60%,#d81c4c 100%)"></div>
<div class="abs" style="left:98px;top:489.2px;width:1.4px;height:9.5px;background:#8e9095"></div>
<div class="abs" style="left:104px;top:487.3px;line-height:12px;color:#8e9095"><span style="font-family:'Liberation Sans',sans-serif;font-size:10.4px;letter-spacing:-0.55px">GAMEOVER</span><span style="margin-left:2px"></span><span style="font-family:'Liberation Serif',serif;font-weight:bold;font-size:10.5px;letter-spacing:0px;display:inline-block;transform:scaleX(1.0);transform-origin:0 50%">LIVE</span></div>
<svg class="abs" style="left:60px;top:537.3px" width="13" height="13" viewBox="0 0 13 13"><path d="M0.3 4.3h2.2L6.2 1.2v10.6L2.5 8.7H0.3z" fill="#8e9095"/><path d="M7.6 6.2V3.4a2.15 2.15 0 0 1 4.3 0v2.8z" fill="#8e9095"/><path d="M8.2 9.3c1 .1 1.8-.4 2.4-1.2M8 12.2c2 0 3.5-1.2 4-3" stroke="#8e9095" stroke-width="1.2" fill="none"/></svg>
<div class="abs" style="left:80px;top:538.05px;width:11.5px;height:11.5px;border-radius:50%;background:radial-gradient(circle at 40% 35%,#f5507a 0,#e9245a 60%,#d81c4c 100%)"></div>
<div class="abs" style="left:98px;top:539.0px;width:1.4px;height:9.5px;background:#8e9095"></div>
<div class="abs" style="left:104px;top:537.0999999999999px;line-height:12px;color:#8e9095"><span style="font-family:'Liberation Serif',serif;font-weight:bold;font-size:10.5px;letter-spacing:0px;display:inline-block;transform:scaleX(1.0);transform-origin:0 50%">ST6</span><span style="margin-left:3px"></span><span style="font-family:'Liberation Sans',sans-serif;font-size:10.4px;letter-spacing:0px">DoK</span></div>
<svg class="abs" style="left:60px;top:558.5px" width="13" height="13" viewBox="0 0 13 13"><path d="M0.3 4.3h2.2L6.2 1.2v10.6L2.5 8.7H0.3z" fill="#8e9095"/><path d="M7.6 6.2V3.4a2.15 2.15 0 0 1 4.3 0v2.8z" fill="#8e9095"/><path d="M8.2 9.3c1 .1 1.8-.4 2.4-1.2M8 12.2c2 0 3.5-1.2 4-3" stroke="#8e9095" stroke-width="1.2" fill="none"/></svg>
<div class="abs" style="left:80px;top:559.25px;width:11.5px;height:11.5px;border-radius:50%;background:radial-gradient(circle at 40% 35%,#f5507a 0,#e9245a 60%,#d81c4c 100%)"></div>
<div class="abs" style="left:98px;top:560.2px;width:1.4px;height:9.5px;background:#8e9095"></div>
<div class="abs" style="left:104px;top:558.3px;line-height:12px;color:#8e9095"><span style="font-family:'Liberation Serif',serif;font-weight:bold;font-size:10px;letter-spacing:0px;display:inline-block;transform:scaleX(1.0);transform-origin:0 50%">S</span></div>
<div class="abs" style="left:104.5px;top:553.5px;width:82px;height:17.5px;border-radius:9px;background:#e8294e;color:#fff;font-size:7.6px;font-weight:bold;text-align:center;line-height:17.5px;letter-spacing:-0.1px">36 NEW MENTIONS</div>
<div class="abs" style="left:55px;top:576.5px;width:182px;height:108px;border-radius:8px;background:#18181b;border:1px solid #212125"></div>
<div class="abs" style="left:64px;top:583.5px;font-size:10.5px;font-weight:bold;color:#45a366;line-height:12px">Connected</div>
<div class="abs" style="left:64px;top:596.5px;font-size:8.2px;color:#a2a5ab;line-height:11px;transform:scaleX(.87);transform-origin:0 50%"><span style="font-family:'Liberation Serif',serif;font-weight:bold">BOSS LIVE</span> / ST6 E-SPORTS</div>
<svg class="abs" style="left:188px;top:589px" width="13" height="12" viewBox="0 0 13 12"><path d="M1 4.5v3M3.5 2v8M6 0.8v10.4M8.5 2.5v7M11 4v4" stroke="#b5b7bb" stroke-width="1.3"/></svg>
<svg class="abs" style="left:211px;top:591px" width="14" height="8" viewBox="0 0 14 8"><path d="M1 5.5c3.5-4 8.5-4 12 0l-1.2 1.8-2.6-1V4.6C8 4 6 4 4.8 4.6v1.7l-2.6 1z" fill="#b5b7bb"/></svg>
<div class="abs" style="left:66px;top:614px;width:52px;height:20.5px;border-radius:6px;background:#222226"></div>
<div class="abs" style="left:122.5px;top:614px;width:52px;height:20.5px;border-radius:6px;background:#222226"></div>
<div class="abs" style="left:179px;top:614px;width:52px;height:20.5px;border-radius:6px;background:#222226"></div>
<svg class="abs" style="left:88px;top:617px" width="13" height="13" viewBox="0 0 13 13"><rect x="0.5" y="0.8" width="12" height="8.4" rx="1.5" fill="#f2f3f5"/><path d="M6.5 9.5v2M4 12h5" stroke="#f2f3f5" stroke-width="1.2"/><path d="M4 7c.2-2 1.5-3 3.5-3V2.7L9.8 5 7.5 7.2V6C6 6 5 6.3 4 7z" fill="#19191c"/></svg>
<svg class="abs" style="left:143px;top:618px" width="12" height="12" viewBox="0 0 12 12"><circle cx="3" cy="3" r="2.5" fill="#f2f3f5"/><path d="M9 0.5l2.6 4.4H6.4z" fill="#f2f3f5"/><circle cx="3" cy="9" r="2.5" fill="#f2f3f5"/><path d="M9 6.5l.8 1.7 1.8.8-1.8.8L9 11.5l-.8-1.7-1.8-.8 1.8-.8z" fill="#f2f3f5"/></svg>
<svg class="abs" style="left:199px;top:617px" width="12" height="6" viewBox="0 0 12 6"><path d="M6 0.5v3M2.5 1.5l1.5 2.5M9.5 1.5L8 4M0.8 4l2.2 1.2M11.2 4L9 5.2" stroke="#f2f3f5" stroke-width="1.1"/></svg>
<svg class="abs" style="left:137px;top:655px" width="8" height="11" viewBox="0 0 8 11"><rect x="2" y="0.5" width="4" height="7" rx="2" fill="#d8d9dc"/><path d="M0.8 5.5a3.2 3.2 0 0 0 6.4 0M4 9v2" stroke="#d8d9dc" stroke-width="1" fill="none"/></svg>
<svg class="abs" style="left:213px;top:656px" width="10" height="10" viewBox="0 0 10 10"><path d="M5 0.5l1 1.6 1.9-.3.3 1.9 1.6 1-1 1.6.6 1.8-1.9.4-.8 1.8L5 9l-1.7.8-.8-1.8-1.9-.4.6-1.8-1-1.6 1.6-1 .3-1.9 1.9.3z" fill="#d8d9dc"/><circle cx="5" cy="5" r="1.6" fill="#19191c"/></svg>
<!-- main grid -->
<div class="tile" id="t0" style="left:248.75px;top:64.7px;width:337.25px;height:189.5px;background:#27282c"></div>
<div class="tile" id="t1" style="left:591.1px;top:64.7px;width:337.9px;height:189.5px;background:#b38461"></div>
<div class="tile" id="t2" style="left:933.9px;top:64.7px;width:337.35px;height:189.5px;background:#a29c7f"></div>
<div class="tile" id="t3" style="left:248.75px;top:259.8px;width:337.25px;height:189.05px;background:#43423c"></div>
<div class="tile" id="t4" style="left:591.1px;top:259.8px;width:337.9px;height:189.05px;background:#343c41"></div>
<div class="tile" id="t5" style="left:933.9px;top:259.8px;width:337.35px;height:189.05px;background:#d6a9a9"></div>
<div class="tile" id="t6" style="left:248.75px;top:454.6px;width:337.25px;height:189.8px;background:#ee7272"></div>
<div class="tile" id="t7" style="left:591.1px;top:454.6px;width:337.9px;height:189.8px;background:#161616"></div>
<div class="tile" id="t8" style="left:933.9px;top:454.6px;width:337.35px;height:189.8px;background:#0b0b0d"></div>
<div class="tile" style="left:248.75px;top:64.7px;width:337.25px;height:189.5px;background:#202125"><div class="abs" style="left:0;top:0;width:337px;height:189px;filter:blur(1.2px)"><div class="abs" style="left:0px;top:0px;width:337px;height:189px;background:#202125;"></div><div class="abs" style="left:0px;top:0px;width:215px;height:60px;background:linear-gradient(180deg,#3d3a34 0%,#45413a 50%,#3a3630 100%);"></div><div class="abs" style="left:13px;top:5px;width:68px;height:30px;background:#4e493f;"></div><div class="abs" style="left:91px;top:7px;width:55px;height:28px;background:#4a453c;"></div><div class="abs" style="left:151px;top:15px;width:45px;height:30px;background:#3b3832;"></div><div class="abs" style="left:41px;top:52px;width:45px;height:5px;background:#2b4434;"></div><div class="abs" style="left:0px;top:59px;width:210px;height:8px;background:#2a2a2c;"></div><div class="abs" style="left:207px;top:0px;width:26px;height:60px;background:#333335;"></div><div class="abs" style="left:191px;top:0px;width:38px;height:62px;background:#1c1d20;transform:skewX(-22deg)"></div><div class="abs" style="left:229px;top:0px;width:2.5px;height:42px;background:#48484a;"></div><div class="abs" style="left:233px;top:0px;width:104px;height:50px;background:#1d1e21;"></div><div class="abs" style="left:0px;top:67px;width:170px;height:122px;background:linear-gradient(180deg,#202125 0%,#25262b 100%);"></div><div class="abs" style="left:51px;top:140px;width:120px;height:2px;background:#2e2f33;"></div><div class="abs" style="left:61px;top:153px;width:110px;height:2px;background:#2d2e32;"></div><div class="abs" style="left:169px;top:110px;width:28px;height:22px;background:#3e3444;border-radius:45%"></div><div class="abs" style="left:163px;top:123px;width:64px;height:66px;background:#1d1d21;border-radius:45% 45% 10% 10%"></div><div class="abs" style="left:273px;top:43px;width:60px;height:100px;background:#202125;"></div><div class="abs" style="left:279px;top:55.0px;width:24px;height:1px;background:#34353a;"></div><div class="abs" style="left:279px;top:65.5px;width:24px;height:1px;background:#34353a;"></div><div class="abs" style="left:279px;top:76.0px;width:24px;height:1px;background:#34353a;"></div><div class="abs" style="left:279px;top:86.5px;width:24px;height:1px;background:#34353a;"></div><div class="abs" style="left:279px;top:97.0px;width:24px;height:1px;background:#34353a;"></div><div class="abs" style="left:279px;top:107.5px;width:24px;height:1px;background:#34353a;"></div><div class="abs" style="left:279px;top:118.0px;width:24px;height:1px;background:#34353a;"></div><div class="abs" style="left:279px;top:128.5px;width:24px;height:1px;background:#34353a;"></div><div class="abs" style="left:279px;top:139.0px;width:24px;height:1px;background:#34353a;"></div><div class="abs" style="left:291px;top:137px;width:40px;height:34px;background:transparent;border-radius:50%;border:1.2px solid #45464b;border-top-color:transparent;border-bottom-color:transparent"></div><div class="abs" style="left:308px;top:149px;width:5px;height:5px;background:transparent;border-radius:50%;border:1px solid #45464b"></div><div class="abs" style="left:7.0px;top:174.5px;width:7px;height:7px;background:#4a2a30;border-radius:1px"></div><div class="abs" style="left:16.5px;top:174.5px;width:7px;height:7px;background:#274437;border-radius:1px"></div><div class="abs" style="left:26.0px;top:174.5px;width:7px;height:7px;background:#4a3525;border-radius:1px"></div><div class="abs" style="left:35.5px;top:174.5px;width:7px;height:7px;background:#2a3550;border-radius:1px"></div><div class="abs" style="left:7px;top:132px;width:7px;height:6px;background:#3e3f43;border-radius:1px"></div><div class="abs" style="left:16px;top:133px;width:12px;height:2px;background:#34353a;"></div></div></div>
<div class="abs" style="left:374px;top:146.5px;width:85.5px;height:26px;border-radius:6px;background:#35363b;border:1px solid #44454a;color:#ecedf0;font-size:9.8px;font-weight:bold;text-align:center;line-height:24px">Watch Stream</div>
<div class="abs" style="left:599px;top:225px;width:21.5px;height:21.5px;border-radius:5px;background:rgba(40,25,15,.58)"></div>
<svg class="abs" style="left:603.3px;top:229.8px" width="13" height="12" viewBox="0 0 13 12"><path d="M1.6 9.6V7.2A4.9 4.9 0 0 1 11.4 7.2" stroke="#f0ece8" stroke-width="1.25" fill="none"/><path d="M8.2 11.6c2.2 0 3.3-.8 3.3-2.7V8H10C8.8 8 8.2 8.8 8.2 9.7z" fill="#f0ece8"/><path d="M1.2 10.6L11.6 1.2" stroke="rgba(60,45,35,.9)" stroke-width="2"/><path d="M1.6 11.3L12 1.9" stroke="#f0ece8" stroke-width="1.2"/></svg>
<div class="abs" style="left:942px;top:225px;width:21.5px;height:21.5px;border-radius:5px;background:rgba(30,28,22,.62)"></div>
<svg class="abs" style="left:946.3px;top:229.8px" width="13" height="12" viewBox="0 0 13 12"><path d="M1.6 9.6V7.2A4.9 4.9 0 0 1 11.4 7.2" stroke="#f0ece8" stroke-width="1.25" fill="none"/><path d="M8.2 11.6c2.2 0 3.3-.8 3.3-2.7V8H10C8.8 8 8.2 8.8 8.2 9.7z" fill="#f0ece8"/><path d="M1.2 10.6L11.6 1.2" stroke="rgba(60,45,35,.9)" stroke-width="2"/><path d="M1.6 11.3L12 1.9" stroke="#f0ece8" stroke-width="1.2"/></svg>
<div class="abs" style="left:942px;top:420px;width:21.5px;height:21.5px;border-radius:5px;background:rgba(50,35,35,.62)"></div>
<svg class="abs" style="left:946.3px;top:424.8px" width="13" height="12" viewBox="0 0 13 12"><path d="M1.6 9.6V7.2A4.9 4.9 0 0 1 11.4 7.2" stroke="#f0ece8" stroke-width="1.25" fill="none"/><path d="M8.2 11.6c2.2 0 3.3-.8 3.3-2.7V8H10C8.8 8 8.2 8.8 8.2 9.7z" fill="#f0ece8"/><path d="M1.2 10.6L11.6 1.2" stroke="rgba(60,45,35,.9)" stroke-width="2"/><path d="M1.6 11.3L12 1.9" stroke="#f0ece8" stroke-width="1.2"/></svg>
<div class="abs" style="left:600px;top:614.5px;width:20.5px;height:22px;border-radius:6px;background:#0e0e0e"></div>
<svg class="abs" style="left:604.5px;top:619.5px" width="12" height="12" viewBox="0 0 12 12"><path d="M4.2 6.8V3.5a2 2 0 0 1 3.8-.8M8.2 5v1.5a2 2 0 0 1-2.6 1.9" stroke="#e8e8e8" stroke-width="1.4" fill="none"/><path d="M1.5 11L10.5 1.5" stroke="#e8e8e8" stroke-width="1.3"/><path d="M5 10.5h3" stroke="#e8e8e8" stroke-width="1.2"/></svg>
<div class="av" style="left:733.5px;top:132.8px;width:53px;height:53px;"><div class="abs" style="left:0;top:0;width:53px;height:53px;filter:blur(.7px)"><div class="abs" style="left:0;top:0;width:53px;height:53px;background:linear-gradient(180deg,#c7a27a 0%,#e0803a 18%,#6a5552 30%,#4a4a50 55%,#3a3a40 100%)"></div><div class="abs" style="left:16px;top:9px;width:37px;height:44px;background:#1a1414;border-radius:45% 55% 10% 30%"></div><div class="abs" style="left:22px;top:5px;width:10px;height:12px;background:#1a1414;border-radius:50%"></div></div></div>
<svg class="abs" style="left:1070px;top:128px;filter:blur(.6px)" width="64" height="64" viewBox="0 0 64 64"><defs><clipPath id="c3"><circle cx="32" cy="30" r="22"/></clipPath><radialGradient id="g3" cx="50%" cy="47%" r="50%"><stop offset="70%" stop-color="#e88ab8" stop-opacity="0"/><stop offset="84%" stop-color="#e88ab8" stop-opacity=".9"/><stop offset="100%" stop-color="#e88ab8" stop-opacity="0"/></radialGradient></defs><circle cx="32" cy="30" r="28" fill="url(#g3)"/><g clip-path="url(#c3)"><rect x="0" y="0" width="64" height="64" fill="#d4c0b4"/><rect x="0" y="6" width="64" height="12" fill="#c8dcec"/><rect x="18" y="14" width="8" height="20" fill="#d8c4b8"/><rect x="27" y="11" width="10" height="23" fill="#e0ccc0"/><rect x="38" y="9" width="7" height="25" fill="#cdb8ac"/><rect x="10" y="34" width="26" height="22" fill="#78a858"/><rect x="18" y="40" width="10" height="8" fill="#58b8c0"/><rect x="34" y="36" width="14" height="14" fill="#f0eeea"/><circle cx="44" cy="24" r="4" fill="#3a2c26"/><rect x="40" y="28" width="12" height="12" fill="#5a4890"/></g><path d="M14 14c-6 8-6 22 0 34 3 5 8 8 12 10" stroke="#6a3a72" stroke-width="7" fill="none"/><path d="M12 20c-3 8-2 18 3 26" stroke="#9a6a8a" stroke-width="2" fill="none"/><path d="M8 54c8 5 36 6 48 0" stroke="#b890c0" stroke-width="5" fill="none" opacity=".85"/><path d="M40 52c6-4 12-12 14-20" stroke="#b06a50" stroke-width="5" fill="none"/><path d="M46 50c4-4 8-10 9-16" stroke="#7a4a7a" stroke-width="2.5" fill="none"/></svg>
<svg class="abs" style="left:390px;top:327.5px;filter:blur(.5px)" width="54" height="54" viewBox="0 0 54 54"><defs><clipPath id="c4"><circle cx="27" cy="27" r="27"/></clipPath></defs><g clip-path="url(#c4)"><rect width="54" height="54" fill="#b8bab4"/><rect x="0" y="0" width="54" height="16" fill="#cfcfc8"/><rect x="30" y="2" width="14" height="12" fill="#8aaa6a"/><rect x="8" y="4" width="12" height="10" fill="#a8a098"/><rect x="22" y="14" width="32" height="9" fill="#e4e8e6"/><rect x="20" y="23" width="34" height="12" fill="#5aa49a"/><path d="M18 30L54 40V50L16 38z" fill="#1c1a1a"/><rect x="21" y="21" width="5" height="8" fill="#c02a2a"/><path d="M4 12h14v30H4z" fill="#d4c4a8"/><circle cx="11" cy="10" r="4" fill="#3a302a"/><rect x="0" y="42" width="54" height="12" fill="#dfe6e4"/><path d="M12 54L24 40M30 54L40 42" stroke="#3a3a38" stroke-width="1.5"/><rect x="47" y="0" width="7" height="54" fill="#2a2a28"/></g></svg>
<div class="abs" style="left:733px;top:327.5px;filter:blur(.8px)"><svg width="54" height="54" viewBox="0 0 54 54"><defs><clipPath id="c5"><circle cx="27" cy="27" r="27"/></clipPath></defs><g clip-path="url(#c5)"><rect width="54" height="54" fill="#5a6a70"/><rect x="0" y="0" width="30" height="20" fill="#3a4a58"/><rect x="0" y="18" width="14" height="10" fill="#c8d0c8"/><path d="M36 0h18v40H42c-4-10-6-24-6-40z" fill="#d6cfa8"/><rect x="28" y="34" width="26" height="20" fill="#9aaaa4"/><path d="M10 14c2-10 14-14 24-10 6 3 8 10 6 18l-4 2-4-8c-6-2-12-2-18 4z" fill="#2a2420"/><path d="M12 20c4-4 12-5 18-2 4 2 6 8 5 14-1 8-6 12-12 12-6 0-11-6-12-12z" fill="#c8a090"/><path d="M5 54c0-8 6-12 14-12 6 0 10 3 12 6l4 6z" fill="#1e2430"/><path d="M30 42l8 12h-6z" fill="#c8d4cc"/></g></svg></div>
<div class="abs" style="left:1075.5px;top:327.5px;filter:blur(.7px)"><svg width="54" height="54" viewBox="0 0 54 54"><defs><clipPath id="c6"><circle cx="27" cy="27" r="27"/></clipPath></defs><g clip-path="url(#c6)"><rect width="54" height="54" fill="#1a1214"/><path d="M34 4h20v22H40z" fill="#e01a2a"/><rect x="0" y="24" width="12" height="18" fill="#2a2022"/><circle cx="5" cy="28" r="1" fill="#ddd"/><circle cx="8" cy="31" r="1" fill="#ddd"/><path d="M10 12c2-10 26-12 30-2 2 4 0 8-2 10H12z" fill="#141010"/><ellipse cx="25" cy="24" rx="10" ry="12" fill="#c89888"/><path d="M10 54V40c4-4 10-4 16-2l4 16z" fill="#f0f0f0"/><path d="M14 46h5v8h-5z" fill="#1a1a2a"/><ellipse cx="40" cy="38" rx="15" ry="16" fill="#d4d0cc"/><ellipse cx="36" cy="30" rx="5" ry="3" fill="#8a8480"/></g></svg></div>
<div class="abs" style="left:390px;top:522.5px;filter:blur(.5px)"><svg width="54" height="54" viewBox="0 0 54 54"><defs><clipPath id="c7"><circle cx="27" cy="27" r="27"/></clipPath></defs><g clip-path="url(#c7)"><rect width="54" height="54" fill="#261618"/><path d="M0 4L20 0v10L0 18z" fill="#b01820"/><path d="M0 22L22 16v12L0 34z" fill="#e42028"/><path d="M38 14l16-4v10l-16 8z" fill="#e8e0e0"/><path d="M36 26l18-2v10H36z" fill="#d02028"/><rect x="0" y="36" width="18" height="18" fill="#3a2420"/><path d="M14 14c2-8 20-10 24 0v6H14z" fill="#1e2838"/><ellipse cx="26" cy="28" rx="9" ry="11" fill="#f0c8b8"/><rect x="15" y="22" width="22" height="6" rx="3" fill="#1a1414"/><path d="M30 54l2-16c6 0 14 4 22 10v6z" fill="#d07030"/><path d="M4 54c2-8 6-14 14-16l2 16z" fill="#a05028"/><path d="M18 54l2-16h12l-2 16z" fill="#e0e0e0"/></g></svg></div>
<svg class="abs" style="left:726px;top:515px;filter:blur(.6px)" width="68" height="68" viewBox="0 0 68 68"><defs><clipPath id="c8"><circle cx="34" cy="34" r="26"/></clipPath><linearGradient id="f8" x1="0" y1="0" x2="1" y2="1"><stop offset="0" stop-color="#d0d0d0"/><stop offset="1" stop-color="#7a7a7a"/></linearGradient></defs><g clip-path="url(#c8)"><rect width="68" height="68" fill="#222"/><rect x="6" y="38" width="22" height="12" fill="#3e3e3e"/><circle cx="54" cy="34" r="14" fill="#8a8a8a"/><path d="M12 30c0-14 10-20 22-19 10 1 16 8 15 18-1 5-3 8-6 10H22c-6-2-10-4-10-9z" fill="#1a1a1a"/><path d="M24 28c3-3 8-3 10 1 2 6 1 12-2 15-3 3-7 2-8-3-1-4-1-9 0-13z" fill="url(#f8)"/><path d="M30 24c2 4 6 8 10 10" stroke="#1a1a1a" stroke-width="3" fill="none"/><path d="M14 68c0-12 6-22 20-24 14-2 22 8 22 24z" fill="#101010"/><path d="M22 42l-4 10" stroke="#9a9a9a" stroke-width="1.5"/></g><path d="M14 14A28 28 0 0 0 8 46" stroke="#8a0e18" stroke-width="3" fill="none"/><path d="M11 20A26 26 0 0 0 9 42" stroke="#c01828" stroke-width="1" fill="none"/><path d="M58 48A28 28 0 0 0 62 30" stroke="#8a0e18" stroke-width="2.5" fill="none"/><path d="M22 63c8 3 18 3 24 0M24 60c6 2 14 2 20 0" stroke="#9a1018" stroke-width="1.6" fill="none"/><path d="M46 8c1 3 3 5 6 5M56 8c0 3 2 6 5 6M48 20c3-1 6 0 8 3M57 20c1-2 3-3 6-3" stroke="#d01c24" stroke-width="2.6" fill="none" stroke-linecap="round"/></svg>
<div class="abs" style="left:729px;top:562px;width:16.5px;height:16.5px;border-radius:50%;background:#fff;border:1.5px solid #161616"></div>
<svg class="abs" style="left:735px;top:565px" width="5" height="11" viewBox="0 0 5 11"><path d="M1.2 .5h2.6L3.2 7H1.8z" fill="#111"/><circle cx="2.5" cy="9" r="1.3" fill="#111"/></svg>
<svg class="abs" style="left:1190px;top:233px" width="74" height="50" viewBox="0 0 74 50"><path d="M29.7 2L12.6 12.8 4.4 16.4 2.6 31.7 14.4 46.2 26 37 29.7 21.8 27 13.7z M17 16.8c5 0 8.3 4.3 8.3 9.5s-3.3 9.8-8.3 9.8-8.6-4.5-8.6-9.8 3.6-9.5 8.6-9.5z" fill="#d82028" fill-rule="evenodd"/></svg>
<div class="abs" style="left:1225px;top:246px;font-size:13.5px;font-weight:bold;font-style:italic;color:#d82028;letter-spacing:-0.4px;line-height:14px;transform:scale(1.2,.85);transform-origin:0 0">OUT</div>
<div class="abs" style="left:1218px;top:261px;font-size:15px;font-weight:bold;font-style:italic;color:#d82028;letter-spacing:-0.4px;line-height:15px;transform:scale(1.15,.9);transform-origin:0 0">LAW</div>
<svg class="abs" style="left:1253px;top:463px" width="10" height="10" viewBox="0 0 10 10"><path d="M1 1l8 8M9 1L1 9" stroke="#d8d9dc" stroke-width="1.3"/></svg>
<div class="abs" style="left:934px;top:497px;width:337px;text-align:center;color:#dfe0e3;font-size:8.5px;font-weight:bold;line-height:12px">Looking for something to do?<br>Start a game or video playlist instantly.</div>
<div class="abs" style="left:944.5px;top:531px;width:98px;height:56px;border-radius:7px;overflow:hidden;background:linear-gradient(160deg,#3aa0e8 0%,#2a8ae0 50%,#3a9ae8 100%)"><div class="abs" style="left:20px;top:18px;width:58px;height:18px;border-radius:3px;background:#8a5a2a;border:2px solid #e8b040"></div><div class="abs" style="left:22px;top:20px;width:54px;height:14px;color:#fff;font-size:9px;font-weight:bold;text-align:center;line-height:14px">COLONIST</div><div class="abs" style="left:24px;top:6px;width:10px;height:10px;border-radius:50%;background:#e8603a"></div><div class="abs" style="left:42px;top:4px;width:9px;height:9px;border-radius:50%;background:#e8c050"></div><div class="abs" style="left:58px;top:6px;width:10px;height:10px;border-radius:50%;background:#c8c8c8"></div><div class="abs" style="left:64px;top:36px;width:12px;height:12px;border-radius:50%;background:#58c838"></div><div class="abs" style="left:18px;top:38px;width:9px;height:9px;border-radius:50%;background:#e8a040"></div><div class="abs" style="left:36px;top:40px;width:9px;height:9px;border-radius:50%;background:#48b858"></div><div class="abs" style="left:0;top:44px;width:16px;height:12px;background:#a8c8d8;border-radius:0 60% 0 0"></div><div class="abs" style="left:80px;top:42px;width:18px;height:14px;background:#68c048;border-radius:60% 0 0 0"></div><div class="abs" style="left:86px;top:2px;width:10px;height:10px;border-radius:50%;background:#e86838"></div></div>
<div class="abs" style="left:1053px;top:531px;width:98px;height:56px;border-radius:7px;background:#fff"></div>
<div class="abs" style="left:1071px;top:552.5px;width:19px;height:13.5px;border-radius:4px;background:#ff0000"></div>
<svg class="abs" style="left:1077.5px;top:555.5px" width="7" height="8" viewBox="0 0 7 8"><path d="M0 0L7 4 0 8z" fill="#fff"/></svg>
<div class="abs" style="left:1092px;top:550px;font-size:14.5px;color:#282828;letter-spacing:-1.2px;line-height:18px;font-weight:bold;transform:scaleX(.9);transform-origin:left">YouTube</div>
<div class="abs" style="left:1162px;top:531px;width:98px;height:56px;border-radius:7px;overflow:hidden;background:linear-gradient(120deg,#5a2a8a 0%,#8a3ab8 40%,#c040c8 70%,#9a2a9a 100%)"><div class="abs" style="left:60px;top:0;width:38px;height:56px;background:linear-gradient(160deg,#3a8a4a 0%,#a8e040 40%,#2a5a3a 70%,#c040c8 100%);clip-path:polygon(30% 0,100% 0,100% 100%,10% 100%,0 60%)"></div><svg class="abs" style="left:6px;top:20px" width="14" height="14" viewBox="0 0 14 14"><path d="M1 1l5 6-5 6M13 1L8 7l5 6" stroke="#fff" stroke-width="2" fill="none"/></svg><div class="abs" style="left:24px;top:17px;font-size:6.5px;font-weight:bold;color:#fff;line-height:7px">VALORANT<br>MASTERS</div><div class="abs" style="left:24px;top:33px;width:24px;height:4px;background:#fff"></div></div>
<div class="abs" style="left:1060px;top:599px;width:12px;height:12px;border-radius:2.5px;border:1.5px solid #e0e1e4"></div>
<div class="abs" style="left:1079px;top:599px;font-size:8.8px;color:#dfe0e3;line-height:12px">Don't show again</div>
<div id="taskbar" class="abs"></div>
<div class="abs" style="left:426px;top:697px;width:7px;height:7px;background:linear-gradient(135deg,#5ed0f8,#1a90e0);border-radius:1px"></div>
<div class="abs" style="left:434px;top:697px;width:7px;height:7px;background:linear-gradient(135deg,#5ed0f8,#1a90e0);border-radius:1px"></div>
<div class="abs" style="left:426px;top:705px;width:7px;height:7px;background:linear-gradient(135deg,#5ed0f8,#1a90e0);border-radius:1px"></div>
<div class="abs" style="left:434px;top:705px;width:7px;height:7px;background:linear-gradient(135deg,#5ed0f8,#1a90e0);border-radius:1px"></div>
<div class="abs" style="left:451px;top:694px;width:143px;height:20px;border-radius:10px;background:#fbfdf1;border:1px solid #e4e8d8"></div>
<svg class="abs" style="left:458px;top:698px" width="11" height="11" viewBox="0 0 11 11"><circle cx="4.6" cy="4.6" r="3.6" stroke="#2a2a2a" stroke-width="1.3" fill="none"/><path d="M7.3 7.3l3 3" stroke="#2a2a2a" stroke-width="1.5"/></svg>
<div class="abs" style="left:474px;top:698.5px;font-size:9px;color:#5a5a5a;line-height:11px">Search</div>
<div class="abs" style="left:561px;top:697px;width:32px;height:15px;border-radius:8px;background:linear-gradient(180deg,#e8f0e0 0%,#6a9a50 40%,#4a8a5a 65%,#5ab0c0 85%,#e8f0e0 100%)"></div>
<div class="abs" style="left:566px;top:697px;width:9px;height:7px;border-radius:50%;background:#5a8a3a"></div>
<div class="abs" style="left:578px;top:696px;width:12px;height:8px;border-radius:50%;background:#4a7a3a"></div>
<div class="abs" style="left:605px;top:698px;width:15px;height:14px;border-radius:3px;background:linear-gradient(180deg,#2a6ac0,#1a4a98)"></div>
<div class="abs" style="left:609.5px;top:702px;width:3px;height:3px;background:#f25022"></div>
<div class="abs" style="left:613px;top:702px;width:3px;height:3px;background:#7fba00"></div>
<div class="abs" style="left:609.5px;top:705.5px;width:3px;height:3px;background:#00a4ef"></div>
<div class="abs" style="left:613px;top:705.5px;width:3px;height:3px;background:#ffb900"></div>
<div class="abs" style="left:634px;top:697px;width:16px;height:14px;border-radius:2px;background:linear-gradient(180deg,#f8d860,#f0b828)"></div>
<div class="abs" style="left:638px;top:706px;width:8px;height:4px;border-radius:1px;background:#2a8ae8"></div>
<div class="abs" style="left:663.5px;top:697px;width:16px;height:16px;border-radius:50%;background:conic-gradient(from -60deg,#ea4335 0 120deg,#fbbc05 120deg 240deg,#34a853 240deg 360deg)"></div>
<div class="abs" style="left:668px;top:701.5px;width:7px;height:7px;border-radius:50%;background:#4285f4;border:1.3px solid #fff"></div>
<div class="abs" style="left:688px;top:692px;width:25px;height:26px;border-radius:4px;background:rgba(255,255,255,.55)"></div>
<div class="abs" style="left:692.5px;top:697px;width:15.5px;height:15.5px;border-radius:50%;background:#5865f2"></div>
<svg class="abs" style="left:695px;top:701px" width="11" height="8" viewBox="0 0 11 8"><path d="M2 1c1-.6 2-.8 2.5-.8l.3.5h1.4l.3-.5C7 .2 8 .4 9 1c1 1.5 1.6 3.2 1.5 5.5C9.6 7.3 8.8 7.6 8 7.8l-.6-.9c.4-.1.8-.3 1-.5-1.8.8-4 .8-5.8 0 .2.2.6.4 1 .5l-.6.9C2.2 7.6 1.4 7.3.5 6.5.4 4.2 1 2.5 2 1z" fill="#fff"/><circle cx="3.8" cy="4.5" r=".9" fill="#5865f2"/><circle cx="7.2" cy="4.5" r=".9" fill="#5865f2"/></svg>
<div class="abs" style="left:702.5px;top:692.5px;width:10px;height:9px;border-radius:5px;background:#e03040;color:#fff;font-size:6px;font-weight:bold;text-align:center;line-height:9px">9+</div>
<div class="abs" style="left:695px;top:715px;width:11px;height:2px;border-radius:1px;background:#1a6ad8"></div>
<div class="abs" style="left:722px;top:699px;width:16px;height:11px;border-radius:2px;background:#1e3a30"></div>
<svg class="abs" style="left:726px;top:701px" width="8" height="7" viewBox="0 0 8 7"><path d="M1 .5l6 6M7 .5l-6 6" stroke="#5ac8a0" stroke-width="1.1"/></svg>
<div class="abs" style="left:752px;top:697px;width:14px;height:14px;border-radius:50%;background:#161616"></div>
<svg class="abs" style="left:754px;top:699px" width="10" height="10" viewBox="0 0 10 10"><circle cx="5" cy="3" r="1.8" fill="none" stroke="#ddd" stroke-width="1"/><circle cx="3" cy="6.6" r="1.8" fill="none" stroke="#ddd" stroke-width="1"/><circle cx="7" cy="6.6" r="1.8" fill="none" stroke="#ddd" stroke-width="1"/></svg>
<div class="abs" style="left:781px;top:697px;width:15px;height:15px;border-radius:50%;background:linear-gradient(180deg,#1a3a70,#0e1a40)"></div>
<div class="abs" style="left:787px;top:700px;width:6px;height:6px;border-radius:50%;border:1.3px solid #fff"></div>
<div class="abs" style="left:782px;top:706px;width:7px;height:2.5px;background:#fff;transform:rotate(20deg)"></div>
<svg class="abs" style="left:810px;top:697px" width="16" height="16" viewBox="0 0 16 16"><path d="M8 0.5l1.6 1.8 2.4-.6.6 2.4 2.3.9-.7 2.3 1.5 1.9-1.8 1.6.6 2.4-2.4.6-.9 2.3-2.3-.7L8 15.5l-1.6-1.8-2.4.6-.6-2.4-2.3-.9.7-2.3L.3 7l1.8-1.6-.6-2.4 2.4-.6.9-2.3 2.3.7z" fill="#6a6e78"/><circle cx="8" cy="8" r="3.6" fill="#2a72d8"/><circle cx="8" cy="8" r="1.6" fill="#e8ecf0"/></svg>
<div class="abs" style="left:839px;top:697px;width:16px;height:16px;border-radius:50%;background:radial-gradient(circle at 60% 40%,#fff 0,#c8e8f8 25%,#3aa0e8 60%,#1a70d0 100%)"></div>
<div class="abs" style="left:668.5px;top:715px;width:5px;height:1.8px;border-radius:1px;background:#7a7a7a"></div>
<div class="abs" style="left:727.5px;top:715px;width:5px;height:1.8px;border-radius:1px;background:#7a7a7a"></div>
<div class="abs" style="left:756.5px;top:715px;width:5px;height:1.8px;border-radius:1px;background:#7a7a7a"></div>
<div class="abs" style="left:785.5px;top:715px;width:5px;height:1.8px;border-radius:1px;background:#7a7a7a"></div>
<div class="abs" style="left:815.5px;top:715px;width:5px;height:1.8px;border-radius:1px;background:#7a7a7a"></div>
<div class="abs" style="left:844.5px;top:715px;width:5px;height:1.8px;border-radius:1px;background:#7a7a7a"></div>
<svg class="abs" style="left:1085px;top:701px" width="9" height="6" viewBox="0 0 9 6"><path d="M1 5l3.5-3.5L8 5" stroke="#222" stroke-width="1.1" fill="none"/></svg>
<svg class="abs" style="left:1103px;top:697px" width="14" height="14" viewBox="0 0 14 14"><path d="M2.5 7a4.5 4.5 0 0 1 7.8-3M11.5 7a4.5 4.5 0 0 1-7.8 3" stroke="#333" stroke-width="1.2" fill="none"/><path d="M10.5 1.2v3h-3M3.5 12.8v-3h3" stroke="#333" stroke-width="1.2" fill="none"/><circle cx="11" cy="10.5" r="2.6" fill="#f08a10"/></svg>
<svg class="abs" style="left:1127px;top:697px" width="8" height="14" viewBox="0 0 8 14"><rect x="2" y="0.8" width="4" height="8" rx="2" fill="none" stroke="#3a6ad8" stroke-width="1.2"/><path d="M0.8 6.5a3.2 3.2 0 0 0 6.4 0M4 10v3" stroke="#3a6ad8" stroke-width="1.1" fill="none"/></svg>
<div class="abs" style="left:1149px;top:699px;font-size:8.5px;color:#222;line-height:10px">ENG</div>
<svg class="abs" style="left:1175px;top:697px" width="14" height="14" viewBox="0 0 14 14"><rect x="1" y="2" width="9" height="8" rx="1" fill="none" stroke="#333" stroke-width="1.1"/><path d="M4 12h4M6 10v2" stroke="#333" stroke-width="1.1"/><path d="M11 1v8" stroke="#333" stroke-width="1.4"/></svg>
<svg class="abs" style="left:1191px;top:699px" width="13" height="11" viewBox="0 0 13 11"><path d="M1 4h2l3-2.5v8L3 7H1z" fill="none" stroke="#333" stroke-width="1"/><path d="M8 3.5c.8.8.8 3.2 0 4M10 2c1.5 1.5 1.5 5.5 0 7" stroke="#333" stroke-width="1" fill="none"/></svg>
<div class="abs" style="left:1210px;top:692px;width:40px;text-align:right;font-size:8.5px;color:#1e1e1e;line-height:12px">8:43 PM<br>3/21/2026</div>
<svg class="abs" style="left:1256px;top:697px" width="12" height="13" viewBox="0 0 12 13"><path d="M6 1a3.6 3.6 0 0 1 3.6 3.6V8l1.4 2H1l1.4-2V4.6A3.6 3.6 0 0 1 6 1z" fill="#2a2a2a"/><path d="M4.5 11.5h3" stroke="#2a2a2a" stroke-width="1.2"/><rect x="5.2" y="4" width="4.5" height="4" fill="#e8e8e8"/><path d="M6 5.2h3M6 6.8h2" stroke="#2a2a2a" stroke-width=".6"/></svg>
<svg class="abs" style="left:0;top:480px" width="300" height="240" viewBox="0 480 300 240"><defs><linearGradient id="rg" x1="0" y1="0" x2="0.4" y2="1"><stop offset="0" stop-color="#e02a3c"/><stop offset=".5" stop-color="#d52838"/><stop offset="1" stop-color="#c82434"/></linearGradient><linearGradient id="fg" x1="0" y1="0" x2="0" y2="1"><stop offset="0" stop-color="#474747"/><stop offset=".45" stop-color="#3c3c3c"/><stop offset="1" stop-color="#262626"/></linearGradient><linearGradient id="mg" x1="0" y1="0" x2="0" y2="1"><stop offset="0" stop-color="#9aa0a8"/><stop offset=".6" stop-color="#7a7e86"/><stop offset="1" stop-color="#55585e"/></linearGradient></defs>
  <!-- chair black -->
  <path d="M0 507 C10 517 18 530 26 543 C36 554 52 560 69 568 L75 588 C74 605 68 618 70 630 C74 648 86 664 100 680 C108 690 116 700 117 710 L113 720 L0 720 Z" fill="#0c0d0c"/>
  <path d="M0 507 C10 517 18 530 26 543 C36 554 52 560 69 568" stroke="#1e2620" stroke-width="1" fill="none"/>
  <!-- red chair wing -->
  <path d="M0 596 C12 586 24 578 40 573 C52 570 62 568 70 569 C74 577 73 592 69 603 C66 610 63 615 63 622 C65 636 70 646 78 656 C88 668 97 680 102 692 C105 700 106 706 105 712 L77 712 C72 700 68 690 63 680 C56 668 50 656 46 645 C41 632 37 622 35 612 C24 616 12 622 0 630 Z" fill="url(#rg)"/>
  <path d="M30 576 C33 590 35 600 35 612" stroke="#a81828" stroke-width="1" fill="none"/>
  <!-- mic stand plate -->
  <path d="M140 656 L236 664 L244 676 L240 687 L150 672 Z" fill="#17241b"/>
  <rect x="178" y="672" width="22" height="48" fill="#0a0a0a"/>
  <!-- foam -->
  <rect x="157" y="619" width="88" height="45" rx="10" fill="url(#fg)"/>
  <!-- body -->
  <path d="M237 663 L294 663 L294 674 L237 674 Z" fill="#0e0e0e"/>
  <path d="M243 628 L294 630 L294 664 L243 664 Z" fill="url(#mg)"/>
  <path d="M257 612 L279 618 L280 641 L258 650 Z" fill="#8c929c"/>
  <rect x="239" y="623" width="13" height="41" rx="3" fill="#1c1c1e"/>
  <path d="M239 612 L263 608 L263 623 L239 623 Z" fill="#0c0c0c"/>
  <!-- arm -->
  <path d="M282 574 L294 571 L294 603 L284 606 Z" fill="#2c2c2e"/>
  <path d="M268 598 L284 601 L276 620 L260 615 Z" fill="#262628"/>
  <path d="M272 562 L285 567 L266 597 L251 591 Z" fill="#333335"/>
  <path d="M284 567 L294 566 L294 578 L281 576 Z" fill="#2a2a2c"/>
  <path d="M262 590 C272 592 286 596 294 604" stroke="#0a0a0a" stroke-width="1.3" fill="none"/>
  <path d="M291 541 L295 544 L281 567 L272 563 Z" fill="#e6e0d2"/>
  </svg>

</body></html>
